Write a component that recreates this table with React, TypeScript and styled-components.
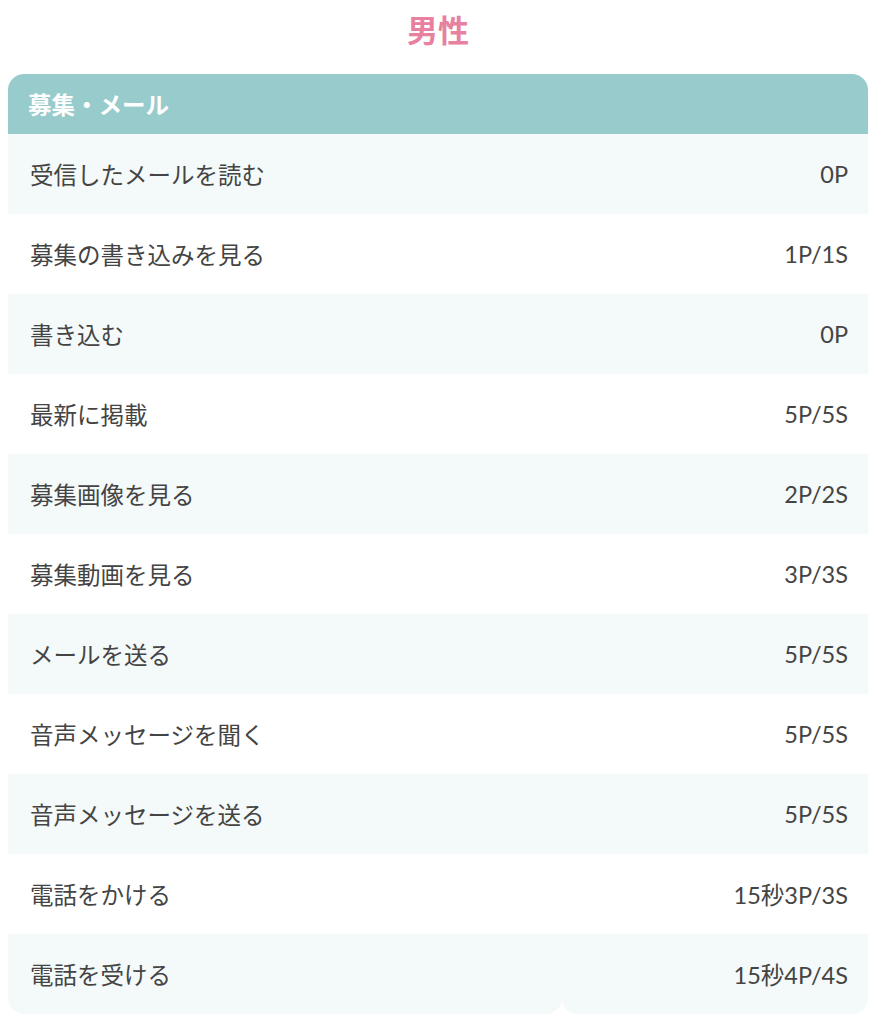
import styled, { createGlobalStyle } from "styled-components";

const GlobalStyle = createGlobalStyle`
  body {
    margin: 8px;
    background: #ffffff;
    font-family: Lato, "Noto Sans CJK JP", sans-serif;
    color: #444444;
  }
`;

const Wrapper = styled.div`
  width: 860px;
`;

const Title = styled.h2`
  margin: 0 0 22px;
  font-size: 31px;
  line-height: 44px;
  font-weight: 700;
  text-align: center;
  color: #e8809f;
`;

const Table = styled.table`
  width: 100%;
  border-collapse: separate;
  border-spacing: 0;
  font-size: 23.5px;
`;

const HeadCell = styled.th`
  height: 60px;
  padding: 0 20px;
  text-align: left;
  font-weight: 700;
  color: #ffffff;
  background-color: #98cbcb;
  border-radius: 16px 16px 0 0;
`;

const Row = styled.tr<{ $striped: boolean; $last: boolean }>`
  td {
    background-color: ${(p) => (p.$striped ? "#f4f9f9" : "#ffffff")};
    border-radius: ${(p) => (p.$last ? "0 0 16px 16px" : "0")};
  }
`;

const Label = styled.td`
  width: 554px;
  height: 80px;
  padding: 0 22px;
  box-sizing: border-box;
`;

const Value = styled.td`
  height: 80px;
  padding: 0 20px;
  text-align: right;
  white-space: nowrap;
`;

interface Fee {
  label: string;
  value: string;
}

const fees: Fee[] = [
  { label: "受信したメールを読む", value: "0P" },
  { label: "募集の書き込みを見る", value: "1P/1S" },
  { label: "書き込む", value: "0P" },
  { label: "最新に掲載", value: "5P/5S" },
  { label: "募集画像を見る", value: "2P/2S" },
  { label: "募集動画を見る", value: "3P/3S" },
  { label: "メールを送る", value: "5P/5S" },
  { label: "音声メッセージを聞く", value: "5P/5S" },
  { label: "音声メッセージを送る", value: "5P/5S" },
  { label: "電話をかける", value: "15秒3P/3S" },
  { label: "電話を受ける", value: "15秒4P/4S" },
];

function App() {
  return (
    <Wrapper>
      <GlobalStyle />
      <Title>男性</Title>
      <Table>
        <thead>
          <tr>
            <HeadCell colSpan={2}>募集・メール</HeadCell>
          </tr>
        </thead>
        <tbody>
          {fees.map((fee, i) => (
            <Row key={fee.label} $striped={i % 2 === 0} $last={i === fees.length - 1}>
              <Label>{fee.label}</Label>
              <Value>{fee.value}</Value>
            </Row>
          ))}
        </tbody>
      </Table>
    </Wrapper>
  );
}

export default App;
